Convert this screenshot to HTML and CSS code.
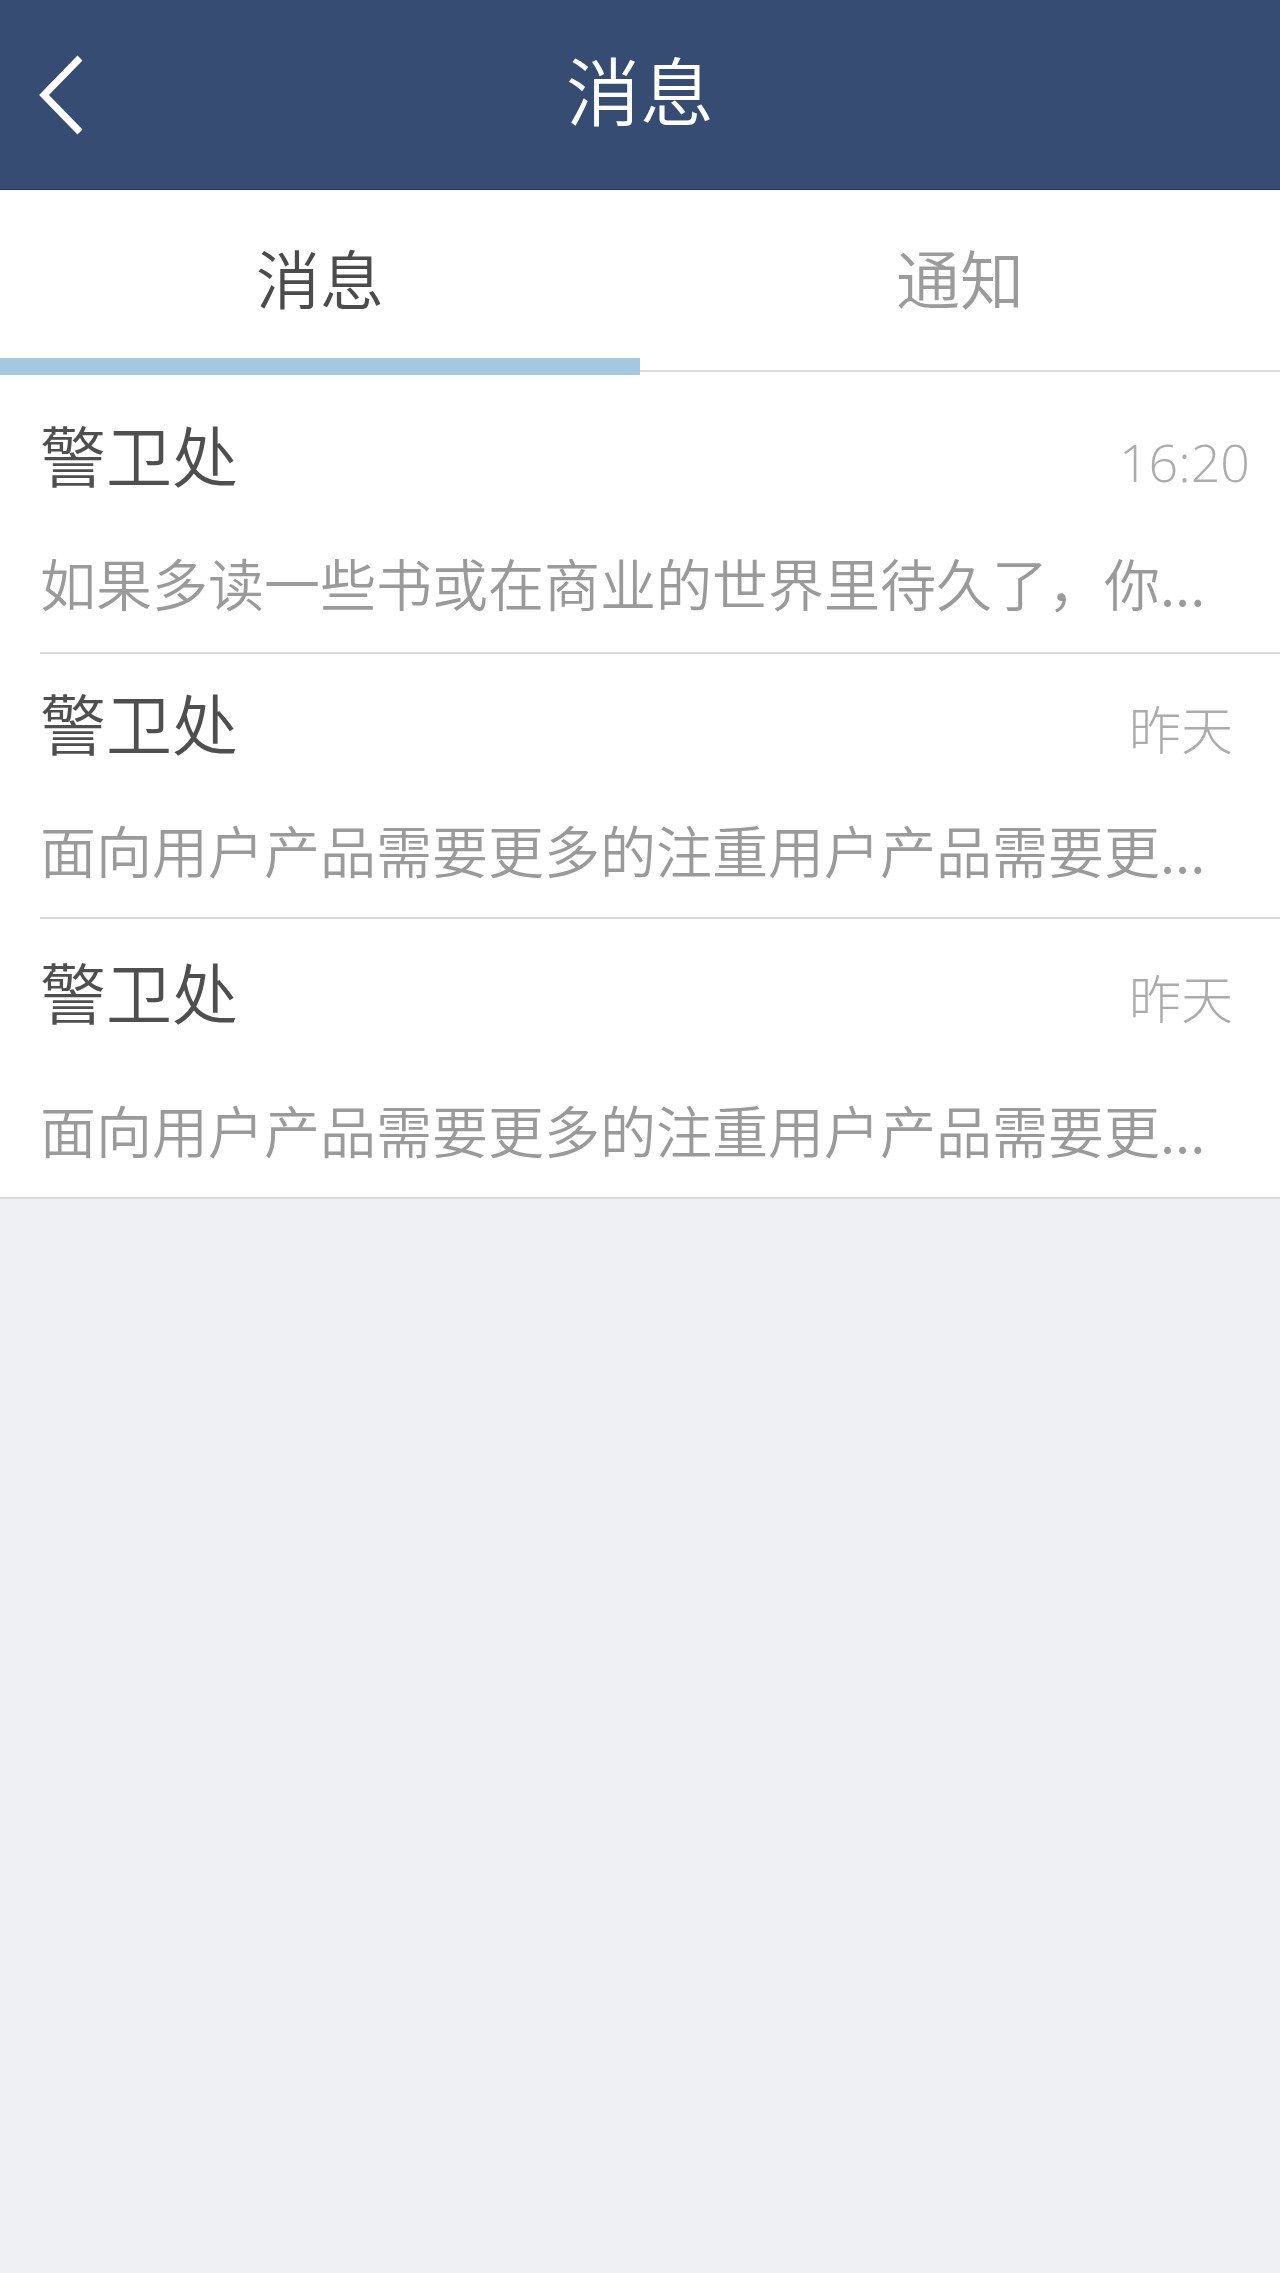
FILE: index.html
```html
<!DOCTYPE html>
<html>
	<head>
		<meta charset="utf-8">
		<title>消息</title>
		<link rel="stylesheet" href="styles.css">
	</head>
	<body>
		<div class="page">
			<!-- 顶部导航 -->
			<div class="topBar">
				<div class="backBtn">
					<svg width="50" height="90" viewBox="0 0 50 90">
						<polyline points="46,8 10,45 46,82" fill="none" stroke="#fff" stroke-width="7" />
					</svg>
				</div>
				<div class="topTitle">消息</div>
				<div></div>
			</div>
			<!-- 选项卡 -->
			<div class="tabs">
				<div class="tab active">消息</div>
				<div class="tab">通知</div>
				<span class="tabLine"></span>
			</div>
			<!-- 消息列表 -->
			<ul class="msgList">
				<li class="msgItem">
					<div class="msgHead">
						<span class="msgName">警卫处</span>
						<span class="msgTime">16:20</span>
					</div>
					<p class="msgText">如果多读一些书或在商业的世界里待久了，你...</p>
				</li>
				<li class="msgItem tight">
					<div class="msgHead">
						<span class="msgName">警卫处</span>
						<span class="msgTime day">昨天</span>
					</div>
					<p class="msgText">面向用户产品需要更多的注重用户产品需要更...</p>
				</li>
				<li class="msgItem loose">
					<div class="msgHead">
						<span class="msgName">警卫处</span>
						<span class="msgTime day">昨天</span>
					</div>
					<p class="msgText">面向用户产品需要更多的注重用户产品需要更...</p>
				</li>
			</ul>
		</div>
	</body>
</html>
```
FILE: styles.css
```css
* {
	margin: 0;
	padding: 0;
}
html, body {
	background-color: #eff0f4;
}
body {
	font-family: "Noto Sans CJK SC", sans-serif;
	font-weight: 300;
}
.page {
	min-height: 2273px;
}
.topBar {
	height: 189px;
	background-color: #374c73;
	border-bottom: 1px solid #22365e;
	display: grid;
	grid-template-columns: 1fr auto 1fr;
	align-items: center;
}
.backBtn {
	padding-left: 34px;
	display: flex;
	align-items: center;
}
.backBtn svg {
	display: block;
}
.topTitle {
	font-size: 74px;
	font-weight: 350;
	line-height: 176px;
	height: 189px;
	color: #fff;
}
.tabs {
	height: 180px;
	background-color: #fff;
	border-bottom: 2px solid #dcdcdc;
	display: flex;
	position: relative;
}
.tab {
	flex: 1;
	text-align: center;
	font-size: 64px;
	font-weight: 350;
	line-height: 173px;
	color: #9b9b9b;
}
.tab.active {
	color: #4b4b4b;
}
.tabLine {
	position: absolute;
	left: 0;
	top: 168px;
	width: 50%;
	height: 17px;
	background-color: #a3c8df;
}
.msgList {
	list-style: none;
	background-color: #fff;
	border-bottom: 2px solid #dadada;
}
.msgItem {
	margin-left: 40px;
	padding: 41px 0 35px;
	border-bottom: 2px solid #dadada;
}
.msgItem:last-child {
	border-bottom: none;
}
.msgItem.tight {
	padding: 27px 0 33px;
}
.msgItem.tight .msgText {
	margin-top: 53px;
}
.msgItem.loose {
	padding: 31px 0 33px;
}
.msgItem.loose .msgText {
	margin-top: 64px;
}
.msgHead {
	height: 80px;
	display: flex;
	justify-content: space-between;
	align-items: baseline;
}
.msgName {
	font-size: 66px;
	font-weight: 350;
	line-height: 80px;
	color: #4f4f4f;
}
.msgTime {
	font-family: "Open Sans", "Noto Sans CJK SC", sans-serif;
	font-size: 52px;
	line-height: 80px;
	color: #acacac;
	margin-right: 30px;
}
.msgTime.day {
	margin-right: 47px;
}
.msgText {
	margin-top: 54px;
	font-size: 56px;
	font-weight: 350;
	line-height: 70px;
	color: #9a9a9a;
	white-space: nowrap;
}
```
